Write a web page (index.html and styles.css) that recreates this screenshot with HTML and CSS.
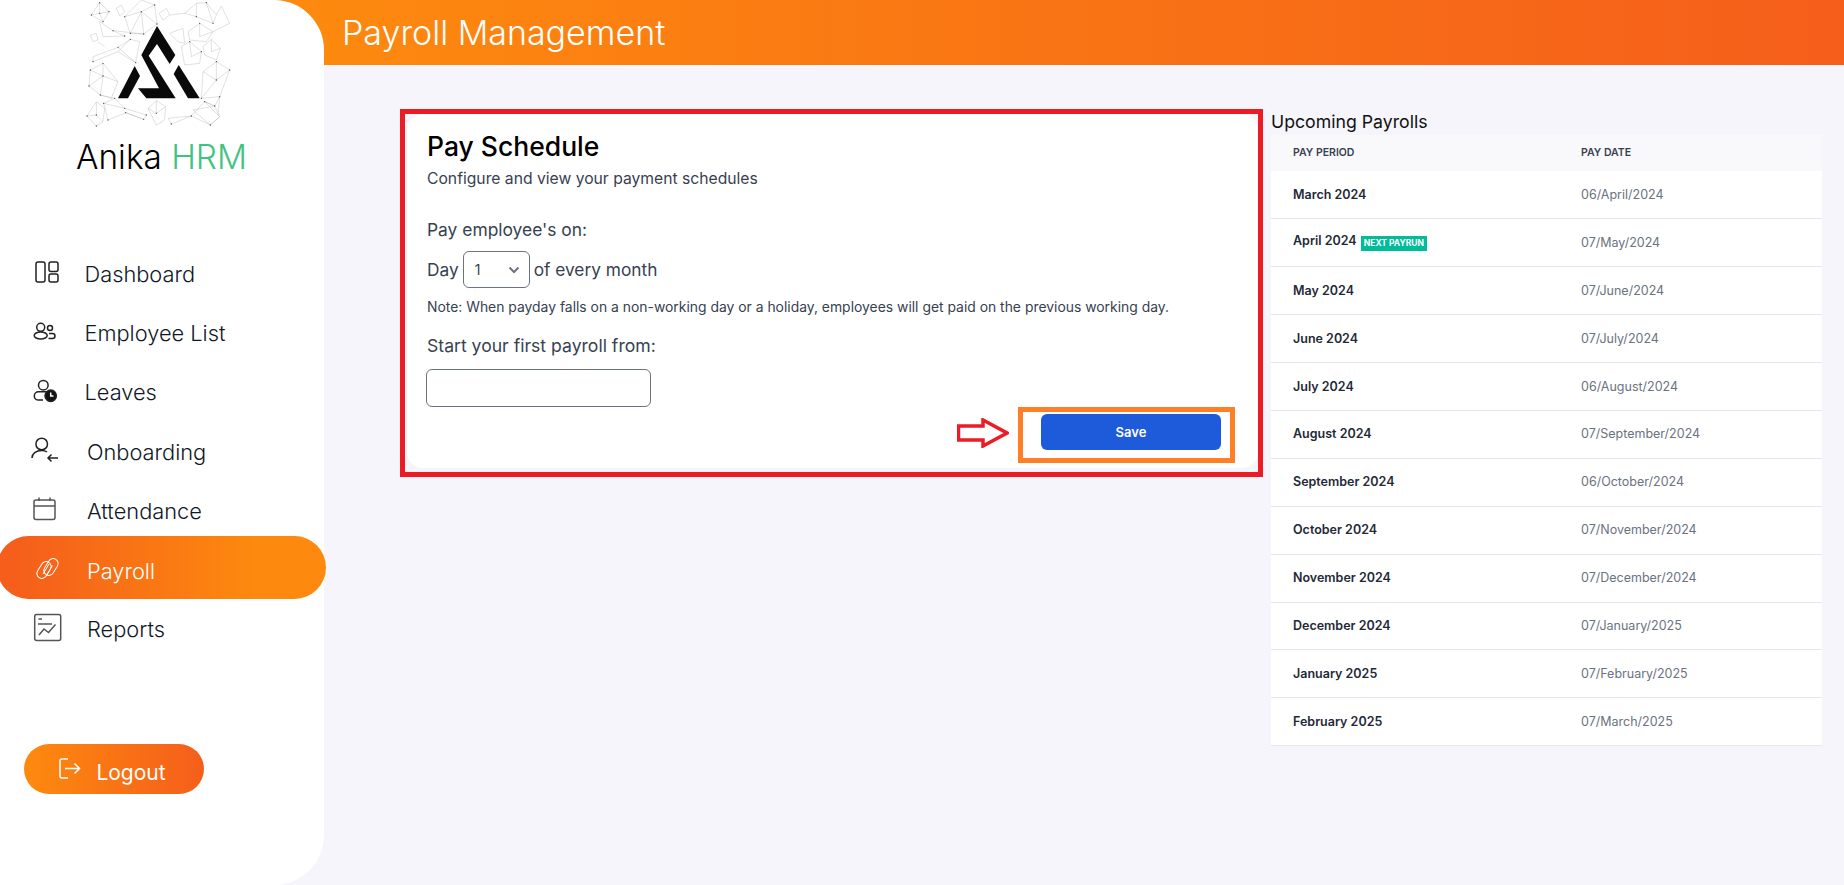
FILE: index.html

```html
<!DOCTYPE html>
<html lang="en">
<head>
  <meta charset="UTF-8">
  <meta name="viewport" content="width=device-width, initial-scale=1.0">
  <title>Payroll Management | Anika HRM</title>
  <link rel="stylesheet" href="styles.css">
</head>
<body>
  <aside class="sidebar">
    <svg class="logo" viewBox="250 0 480 405">
      <g class="logo-net">
        <path d="M275 45L300 8L328 35L310 65L275 45M300 8L300 40L328 35M300 40L275 45M300 40L310 65M350 25L365 15L375 35L360 48L350 25"/>
        <path d="M375 50L425 0M425 0L465 15L472 72L432 102L392 100L375 50M425 35L375 50M425 35L465 15M425 35L472 72M425 35L432 102M425 35L392 100"/>
        <path d="M300 65L340 92L375 108L310 110L300 65M340 92L432 102M272 105L290 100L295 120L280 125L272 105M295 125L315 140"/>
        <path d="M280 170L355 142L392 118L420 125L408 188L355 155L280 185L280 170M355 155L392 118M355 142L408 188"/>
        <path d="M268 258L272 210L310 190L355 245L335 295L302 285L268 258M310 190L310 228L355 245M310 228L272 210M310 228L268 258M310 228L302 285"/>
        <path d="M262 348L290 305L315 325L310 365L290 378L262 348M290 305L290 345L310 365M290 345L262 348M302 285L345 295L375 325L440 345L432 358L378 338L325 360L312 310L345 295M312 310L375 325M378 338L432 358"/>
        <path d="M445 325L470 302L498 320L495 360L470 375L445 325M470 302L470 340L498 320M470 340L445 325"/>
        <path d="M505 355L575 348L615 305L660 350L632 375L575 348M505 355L515 372L575 348M615 305L645 318L660 290L655 345"/>
        <path d="M478 40L500 25L510 45L490 60L478 40M510 45L555 40L590 10L620 8L650 45L640 70L590 50L555 40M590 10L590 50M620 8L640 70M650 45L665 18L690 70L640 95"/>
        <path d="M510 100L550 85L555 130L535 125L510 100M565 95L600 70L640 95L620 125L570 120L565 95M600 70L600 110L640 95M545 140L570 125L605 155L600 190L555 195L545 140M570 125L575 170L605 155"/>
        <path d="M610 140L635 118L662 145L650 180L615 165L610 140M635 118L635 155L662 145M610 215L650 185L690 210L660 290L605 295L610 215M650 185L650 240L690 210M650 240L610 215M650 240L605 295"/>
        <path d="M580 330L645 318L660 350L632 375L580 330M645 318L615 305"/>
        <path class="logo-dots" d="M275 45h.1M300 8h.1M328 35h.1M310 65h.1M300 40h.1M425 35h.1M465 15h.1M472 72h.1M432 102h.1M392 100h.1M375 50h.1M340 92h.1M375 108h.1M355 142h.1M392 118h.1M408 188h.1M280 185h.1M310 190h.1M310 228h.1M272 210h.1M268 258h.1M302 285h.1M345 295h.1M312 310h.1M375 325h.1M440 345h.1M432 358h.1M378 338h.1M325 360h.1M290 345h.1M262 348h.1M290 378h.1M470 340h.1M575 348h.1M615 305h.1M645 318h.1M632 375h.1M515 372h.1M650 185h.1M650 240h.1M660 290h.1M605 295h.1M690 210h.1M590 50h.1M620 8h.1M640 70h.1M600 70h.1M570 125h.1M605 155h.1"/>
      </g>
      <polygon class="logo-mark" points="472,78 527,165 510,192 472,132 447,167 528,295 440,295 415,265 478,265 425,165"/>
      <polygon class="logo-mark" points="405,198 421,228 385,295 355,295"/>
      <polygon class="logo-mark" points="537,195 600,295 565,295 522,222"/>
    </svg>
    <div class="brand">Anika <span class="brand-accent">HRM</span></div>

    <nav class="nav">
      <a class="nav-item">
        <svg class="nav-icon" viewBox="0 0 30 30"><rect x="5" y="3" width="9" height="20" rx="2"/><rect x="18" y="3" width="9" height="9.500" rx="2"/><rect x="18" y="15" width="9" height="8" rx="2"/></svg>
        Dashboard
      </a>
      <a class="nav-item">
        <svg class="nav-icon" viewBox="0 0 30 30"><circle cx="9.700" cy="9.300" r="4"/><ellipse cx="9.700" cy="17.500" rx="6.500" ry="3.500"/><circle cx="19" cy="10" r="2.500"/><path d="M18 15.500h3.500a2.500 2.500 0 0 1 0 5h-4"/></svg>
        Employee List
      </a>
      <a class="nav-item">
        <svg class="nav-icon" viewBox="0 0 30 30"><circle cx="12.300" cy="8.200" r="4.800"/><path d="M17 14.700H7.500a4.200 4.200 0 0 0 0 8.400H12"/><circle class="fill-dark" cx="19.700" cy="18.700" r="5.700"/><path class="stroke-white" d="M19.700 15.500v3.500h2.800"/></svg>
        Leaves
      </a>
      <a class="nav-item nav-item-wide">
        <svg class="nav-icon" viewBox="0 0 30 30"><circle cx="10.700" cy="7" r="5.800"/><path d="M1 21c0-4.500 4-7.500 9.700-7.500 2 0 4 .5 5.300 1.500"/><path d="M27 21H17M20.500 17.500L17 21l3.500 3.500"/></svg>
        Onboarding
      </a>
      <a class="nav-item nav-item-wide">
        <svg class="nav-icon nav-icon-grey" viewBox="0 0 30 30"><rect x="3" y="4" width="21" height="19.500" rx="2"/><path d="M3 10h21M8 1.500V5M19 1.500V5"/></svg>
        Attendance
      </a>
      <a class="nav-item nav-item-wide nav-item-active">
        <svg class="nav-icon nav-icon-white" viewBox="0 0 30 30"><rect x="8" y="5" width="10" height="18" rx="5" transform="rotate(32 13 14)"/><rect x="15" y="2" width="10" height="18" rx="5" transform="rotate(32 20 11)"/><path d="M12 18l6-10M15.500 19.500l6-10"/></svg>
        Payroll
      </a>
      <a class="nav-item nav-item-wide">
        <svg class="nav-icon nav-icon-grey" viewBox="0 0 30 30"><rect x="3.700" y="0.500" width="26" height="26" rx="2"/><path d="M7.500 5H11M7 10h14M8 21l5-6 4.500 3.500 7-8"/></svg>
        Reports
      </a>
    </nav>

    <a class="logout">
      <svg class="logout-icon" viewBox="0 0 24 24"><path d="M11 2H5a2 2 0 0 0-2 2v15a2 2 0 0 0 2 2h6"/><path d="M8 11.500h14M17.500 6.500l5 5-5 5"/></svg>
      Logout
    </a>
  </aside>

  <main class="main">
    <header class="topbar">Payroll Management</header>

    <div class="content">
      <section class="highlight">
        <div class="card">
          <h2 class="card-title">Pay Schedule</h2>
          <p class="card-sub">Configure and view your payment schedules</p>
          <p class="field-label">Pay employee's on:</p>
          <div class="day-row">
            Day
            <span class="select-wrap">
              <select class="day-select"><option>1</option></select>
              <svg class="select-chevron" viewBox="0 0 12 8"><path d="M1.500 1.500L6 6l4.500-4.500"/></svg>
            </span>
            of every month
          </div>
          <p class="note">Note: When payday falls on a non-working day or a holiday, employees will get paid on the previous working day.</p>
          <p class="field-label start-label">Start your first payroll from:</p>
          <input class="date-input" type="text">
          <div class="save-row">
            <svg class="arrow" width="52" height="30" viewBox="0 0 52 30"><polygon points="1.500,8 26,8 26,2 50,15 26,28 26,22 1.500,22"/></svg>
            <div class="save-box"><button class="save-btn">Save</button></div>
          </div>
        </div>
      </section>

      <section class="upcoming">
        <h3 class="upcoming-title">Upcoming Payrolls</h3>
        <table class="pay-table">
          <thead>
            <tr><th class="col-period">Pay Period</th><th>Pay Date</th></tr>
          </thead>
          <tbody>
            <tr><td>March 2024</td><td>06/April/2024</td></tr>
            <tr><td>April 2024 <span class="badge">NEXT PAYRUN</span></td><td>07/May/2024</td></tr>
            <tr><td>May 2024</td><td>07/June/2024</td></tr>
            <tr><td>June 2024</td><td>07/July/2024</td></tr>
            <tr><td>July 2024</td><td>06/August/2024</td></tr>
            <tr><td>August 2024</td><td>07/September/2024</td></tr>
            <tr><td>September 2024</td><td>06/October/2024</td></tr>
            <tr><td>October 2024</td><td>07/November/2024</td></tr>
            <tr><td>November 2024</td><td>07/December/2024</td></tr>
            <tr><td>December 2024</td><td>07/January/2025</td></tr>
            <tr><td>January 2025</td><td>07/February/2025</td></tr>
            <tr><td>February 2025</td><td>07/March/2025</td></tr>
          </tbody>
        </table>
      </section>
    </div>
  </main>
</body>
</html>
```

FILE: styles.css

```css
* {
  box-sizing: border-box;
}
body {
  margin: 0;
  height: 885px;
  overflow: hidden;
  display: flex;
  background-color: #f5f5fb;
  font-family: Inter, "Liberation Sans", sans-serif;
  color: #374151;
}

/* sidebar */
.sidebar {
  position: relative;
  z-index: 1;
  flex: 0 0 324px;
  min-width: 0;
  height: 885px;
  display: flex;
  flex-direction: column;
  background-color: #fff;
  border-radius: 0 50px 50px 0;
}
.logo {
  width: 160px;
  height: 135px;
  margin-left: 83px;
}
.logo-net path {
  fill: none;
  stroke: #a5a5a5;
  stroke-width: 1;
}
.logo-net .logo-dots {
  stroke: #555;
  stroke-width: 4;
  stroke-linecap: round;
}
.logo-mark {
  fill: #0a0a0a;
}
.brand {
  margin-top: 4px;
  padding-right: 1px;
  text-align: center;
  font-size: 33.300px;
  font-weight: 300;
  line-height: 37px;
  color: #000;
}
.brand-accent {
  color: #3fc380;
}
.nav {
  margin-top: 68px;
}
.nav-item {
  height: 59.3px;
  display: flex;
  align-items: center;
  padding-left: 31px;
  font-size: 21.800px;
  font-weight: 300;
  color: #111827;
}
.nav-item-active {
  width: 329px;
  height: 63px;
  margin: -4.500px 0 0.800px -3px;
  padding-top: 7px;
  padding-left: 34px;
  border-radius: 32px;
  color: #fff;
  background: linear-gradient(90deg, #f55e1b 5%, #fd8a0e 80%);
}
.nav-icon {
  flex: none;
  width: 30px;
  height: 30px;
  margin-right: 23.500px;
  overflow: visible;
  fill: none;
  stroke: #222;
  stroke-width: 1.500;
}
.nav-item-wide .nav-icon {
  margin-right: 26px;
}
.nav-icon-grey {
  stroke: #555;
}
.nav-icon-white {
  stroke: #fff;
  stroke-width: 1;
}
.fill-dark {
  fill: #111;
}
.stroke-white {
  stroke: #fff;
}
.logout {
  width: 180px;
  height: 50px;
  margin: 85px 0 0 24px;
  padding: 6px 5px 0 0;
  display: flex;
  align-items: center;
  justify-content: center;
  gap: 15px;
  border-radius: 25px;
  color: #fff;
  font-size: 21px;
  background: linear-gradient(90deg, #fd8a0e, #f55e1b);
}
.logout-icon {
  width: 24px;
  height: 24px;
  margin-bottom: 6px;
  fill: none;
  stroke: #fff;
  stroke-width: 1.500;
}

/* main */
.main {
  flex: 1;
  min-width: 0;
}
.topbar {
  height: 65px;
  margin-left: -50px;
  padding-left: 68px;
  line-height: 65px;
  font-size: 34px;
  font-weight: 300;
  color: #fff;
  background: linear-gradient(90deg, #fd8a0e, #f55e1b);
}
.content {
  display: flex;
  align-items: flex-start;
  padding: 44px 22px 0 76px;
}
.highlight {
  flex: 0 0 863px;
  height: 368px;
  padding: 0 0 4px 2px;
  border: 5px solid #ed1c24;
}
.card {
  height: 100%;
  padding: 15px 0 0 20px;
  background-color: #fff;
  border-radius: 16px;
}
.card-title {
  margin: 0;
  font-size: 26.500px;
  font-weight: 500;
  line-height: 34px;
  color: #000;
}
.card-sub {
  margin: 7px 0 0;
  font-size: 15.700px;
  line-height: 18px;
}
.field-label {
  margin: 0;
  font-size: 17.400px;
  line-height: 20px;
}
.card-sub + .field-label {
  margin-top: 32px;
}
.day-row {
  margin-top: 11px;
  display: flex;
  align-items: center;
  gap: 4px;
  font-size: 17.300px;
  line-height: 37px;
}
.select-wrap {
  position: relative;
  height: 37px;
}
.day-select {
  display: block;
  width: 67px;
  height: 37px;
  padding-left: 11px;
  appearance: none;
  background: #fff;
  border: 1px solid #6b7280;
  border-radius: 6px;
  font-family: inherit;
  font-size: 14px;
  color: #374151;
}
.select-chevron {
  position: absolute;
  top: 15px;
  right: 10px;
  width: 12px;
  height: 8px;
  fill: none;
  stroke: #6b7280;
  stroke-width: 2;
}
.note {
  margin: 9px 0 0;
  font-size: 13.900px;
  line-height: 20px;
}
.start-label {
  margin-top: 19px;
  font-size: 17.600px;
}
.date-input {
  display: block;
  width: 225px;
  height: 38px;
  margin: 13px 0 0 -1px;
  background: #fff;
  border: 1px solid #6b7280;
  border-radius: 6px;
}
.save-row {
  padding-right: 23px;
  display: flex;
  justify-content: flex-end;
  align-items: center;
  gap: 9px;
}
.arrow {
  margin-bottom: 4px;
}
.arrow polygon {
  fill: #fff;
  stroke: #ed1c24;
  stroke-width: 3.500;
}
.save-box {
  width: 217px;
  height: 56px;
  padding: 2px 9px 8px 18px;
  border: 5px solid #ff7f27;
}
.save-btn {
  display: block;
  width: 180px;
  height: 36px;
  border: none;
  border-radius: 6px;
  background-color: #1d5bdb;
  color: #fff;
  font-family: inherit;
  font-size: 13px;
  font-weight: 600;
}

/* upcoming table */
.upcoming {
  flex: 1;
  margin-left: 8px;
}
.upcoming-title {
  margin: 0;
  font-size: 17.700px;
  font-weight: 400;
  line-height: 26px;
  color: #111;
}
.pay-table {
  width: 100%;
  border-collapse: collapse;
  background-color: #fff;
  font-size: 12.500px;
}
.pay-table th {
  height: 36px;
  padding: 0 0 2px 22px;
  text-align: left;
  background-color: #f9f9fc;
  font-size: 10.500px;
  font-weight: 600;
  text-transform: uppercase;
  color: #374151;
}
.col-period {
  width: 288px;
}
.pay-table td {
  height: 47.900px;
  padding: 0 0 1px 22px;
  border-bottom: 1px solid #e5e7eb;
  color: #6b7280;
}
.pay-table td:first-child {
  font-weight: 600;
  color: #1f2937;
}
.badge {
  display: inline-block;
  margin-left: 1px;
  padding: 0 3px;
  vertical-align: -1px;
  font-size: 8.500px;
  font-weight: 700;
  line-height: 15px;
  color: #fff;
  background-color: #00bc9b;
}
```
